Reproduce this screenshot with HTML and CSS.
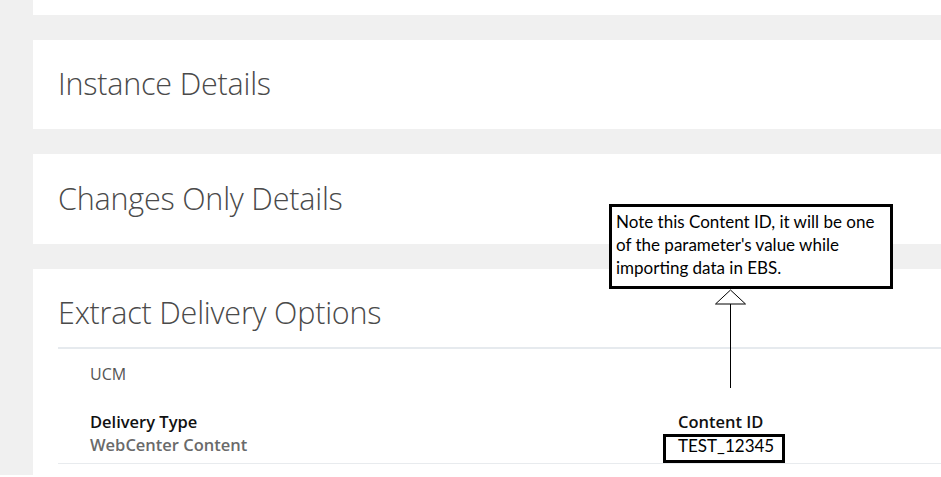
FILE: index.html
```html
<!DOCTYPE html>
<html lang="en">
<head>
<meta charset="utf-8">
<title>Extract Details</title>
<link rel="stylesheet" href="styles.css">
</head>
<body>
<div class="page">
  <section class="card card-top"></section>
  <section class="card card-section"><h2 class="card-title">Instance Details</h2></section>
  <section class="card card-section card-section-b"><h2 class="card-title">Changes Only Details</h2></section>
  <section class="card card-delivery">
    <div class="card-head"><h2 class="card-title">Extract Delivery Options</h2></div>
    <div class="delivery-body">
      <div class="group-name">UCM</div>
      <div class="fields">
        <div class="field">
          <div class="field-label">Delivery Type</div>
          <div class="field-value">WebCenter Content</div>
        </div>
        <div class="field">
          <div class="field-label">Content ID</div>
          <div class="field-value field-id"><span class="id-box">TEST_12345</span></div>
        </div>
      </div>
    </div>
  </section>
  <div class="callout">Note this Content ID, it will be one of the parameter's value while importing data in EBS.</div>
  <svg class="callout-arrow" width="32" height="100" viewBox="0 0 32 100" aria-hidden="true">
    <line x1="16.5" y1="15" x2="16.5" y2="99" stroke="#000" stroke-width="1"/>
    <polygon points="16.5,1 1.5,15 31.5,15" fill="#fff" stroke="#000" stroke-width="1"/>
  </svg>
</div>
</body>
</html>
```

FILE: styles.css
```css
html, body {
  margin: 0;
  padding: 0;
  background: #ffffff;
}

.page {
  position: relative;
  height: 475px;
  background: #f0f0f0;
  padding-left: 33px;
  display: flex;
  flex-direction: column;
  gap: 25px;
  overflow: hidden;
  font-family: "Open Sans", "Noto Sans", sans-serif;
}

.card {
  background: #ffffff;
  flex: none;
}

.card-top {
  height: 15px;
}

.card-section {
  height: 89px;
  box-sizing: border-box;
  display: flex;
  align-items: center;
  padding: 0 0 3px 25px;
}

.card-section-b {
  height: 90px;
  padding-bottom: 2px;
}

.card-title {
  margin: 0;
  font-family: "Open Sans", sans-serif;
  font-weight: 300;
  font-size: 30.5px;
  line-height: 40px;
  color: #4a4a4a;
  letter-spacing: -0.2px;
}

.card-delivery {
  height: 206px;
}

.card-head {
  height: 78px;
  box-sizing: border-box;
  padding: 23px 0 0 25px;
}

.delivery-body {
  margin-left: 25px;
  border-top: 2px solid #e6eaee;
  border-bottom: 1px solid #e8ebee;
  padding: 14px 0 7px 32px;
}

.group-name {
  font-size: 16px;
  line-height: 23px;
  color: #555555;
}

.fields {
  margin-top: 24px;
  display: grid;
  grid-template-columns: 588px 1fr;
}

.field-label {
  font-size: 16.5px;
  line-height: 23px;
  font-weight: 600;
  color: #111111;
}

.field-value {
  font-size: 16.5px;
  line-height: 23px;
  font-weight: 600;
  color: #6a6a6a;
}

.field-id {
  display: flex;
  align-items: flex-start;
  height: 23px;
  margin-left: -15px;
}

.id-box {
  flex: none;
  box-sizing: border-box;
  height: 29px;
  margin-top: 1px;
  border: 3px solid #000;
  padding: 0 8px 0 12px;
  line-height: 17px;
  font-family: "Lato", sans-serif;
  font-weight: 400;
  font-size: 17px;
  color: #000;
}

.callout {
  position: absolute;
  left: 609px;
  top: 204px;
  width: 284px;
  height: 85px;
  box-sizing: border-box;
  border: 3px solid #000;
  background: #fff;
  padding: 3px 4px 0 4px;
  font-family: "Lato", sans-serif;
  font-size: 17px;
  line-height: 23px;
  color: #000;
}

.callout-arrow {
  position: absolute;
  left: 714px;
  top: 289px;
}
```
